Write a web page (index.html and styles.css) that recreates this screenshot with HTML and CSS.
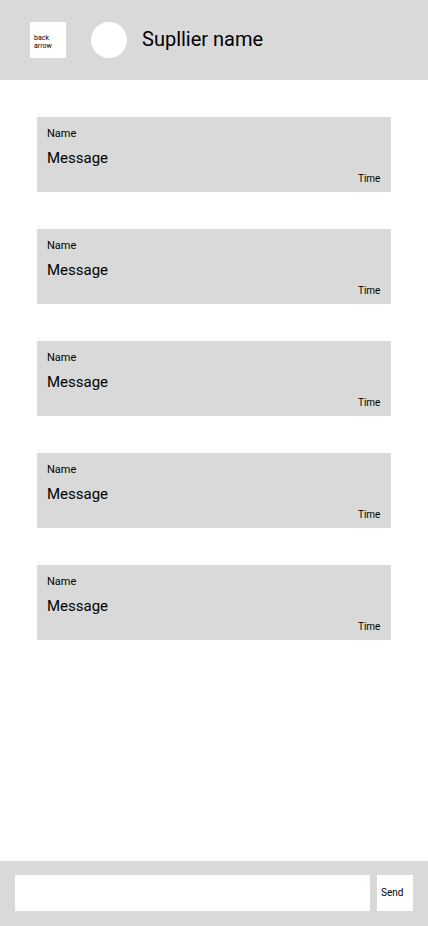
FILE: index.html
```html
<!DOCTYPE html>
<html lang="en">
<head>
<meta charset="utf-8">
<title>Chat</title>
<link rel="stylesheet" href="styles.css">
</head>
<body>
<header class="header">
<button class="back">back<br>arrow</button>
<div class="avatar"></div>
<h1 class="title">Supllier name</h1>
</header>
<main class="messages">
<article class="card"><div class="name">Name</div><div class="text">Message</div><div class="time">Time</div></article>
<article class="card"><div class="name">Name</div><div class="text">Message</div><div class="time">Time</div></article>
<article class="card"><div class="name">Name</div><div class="text">Message</div><div class="time">Time</div></article>
<article class="card"><div class="name">Name</div><div class="text">Message</div><div class="time">Time</div></article>
<article class="card"><div class="name">Name</div><div class="text">Message</div><div class="time">Time</div></article>
</main>
<footer class="composer">
<input class="field" type="text" aria-label="Message">
<button class="send">Send</button>
</footer>
</body>
</html>
```
FILE: styles.css
```css
* { box-sizing: border-box; }
body { margin: 0; height: 926px; display: flex; flex-direction: column; background: #fff; color: #000; font-family: Roboto, sans-serif; }
button, input { border: 0; border-radius: 0; margin: 0; background: #fff; color: #000; font-family: inherit; }
.header { height: 80px; padding-left: 30px; display: flex; align-items: center; background: #d9d9d9; }
.back { width: 36px; height: 36px; padding: 3px 0 0 4px; font-size: 7px; line-height: 8px; text-align: left; }
.avatar { width: 36px; height: 36px; margin-left: 25px; border-radius: 50%; background: #fff; }
.title { margin: 0 0 2px 15px; font-size: 20px; line-height: 23px; font-weight: 400; }
.messages { flex: 1; padding: 37px 37px 0; display: flex; flex-direction: column; gap: 37px; }
.card { height: 75px; padding: 10px 10px 0; background: #d9d9d9; }
.name { font-size: 11px; line-height: 13px; }
.text { margin-top: 9px; font-size: 15px; line-height: 18px; }
.time { margin-top: 6px; padding-right: 0.6px; font-size: 10px; line-height: 12px; text-align: right; }
.composer { height: 65px; padding: 14px 15px 0; display: flex; gap: 7px; background: #d9d9d9; }
.field { width: 355px; height: 36px; padding: 0 10px; }
.send { width: 36px; height: 36px; padding: 0 0 0 4px; font-size: 10px; line-height: 12px; text-align: left; }
```
